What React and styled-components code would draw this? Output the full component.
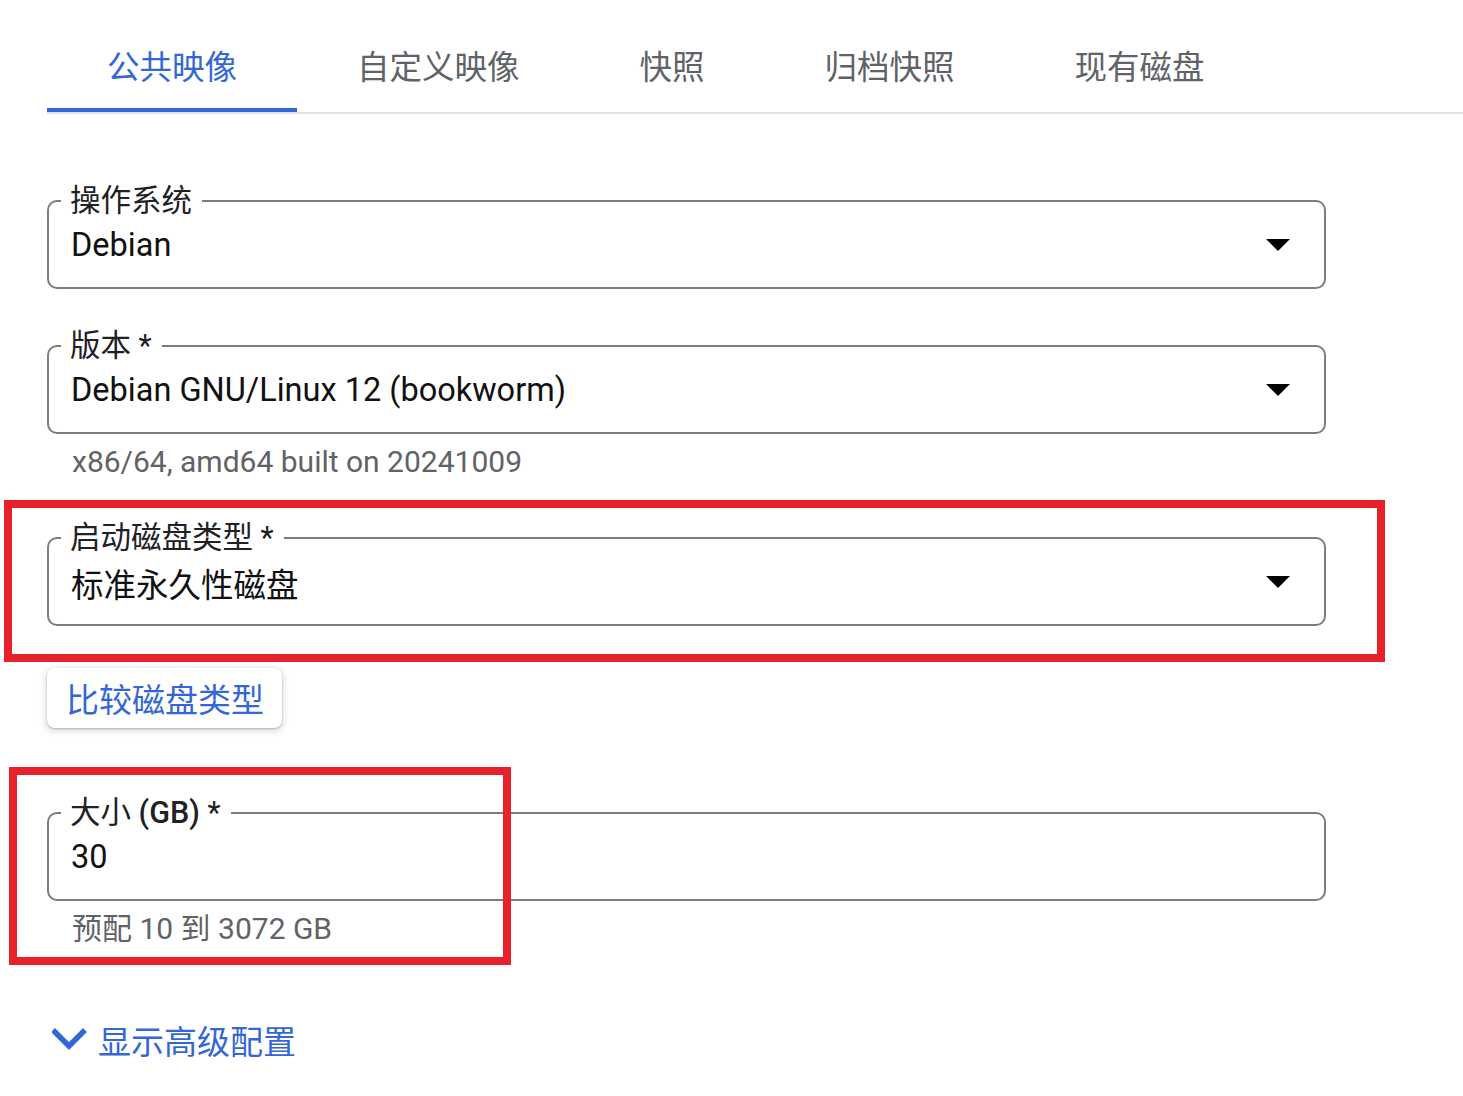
import React from "react";
import styled, { createGlobalStyle } from "styled-components";

const Global = createGlobalStyle`
  html, body { margin: 0; padding: 0; background: #ffffff; }
  body {
    font-family: Roboto, "Noto Sans CJK SC", "Noto Sans", sans-serif;
    color: #202124;
  }
  * { box-sizing: border-box; }
`;

const Page = styled.div`
  position: relative;
  width: 1463px;
  min-height: 1096px;
  padding-left: 47px;
  overflow: hidden;
`;

const TabBar = styled.div`
  display: flex;
  border-bottom: 2px solid #e1e1e1;
`;

const Tab = styled.div`
  padding: 48px 60px 20px;
  font-size: 32.5px;
  line-height: 40px;
  white-space: nowrap;
  color: ${(p) => (p.$active ? "#3367d6" : "#5f6368")};
  border-bottom: 4px solid ${(p) => (p.$active ? "#3367d6" : "transparent")};
`;

const Form = styled.div`
  display: flex;
  flex-direction: column;
  align-items: flex-start;
  padding-top: 71px;
`;

const Field = styled.fieldset`
  margin: ${(p) => p.$top || 0}px 0 0;
  width: 1279px;
  border: 2px solid #7d7d7d;
  border-radius: 10px;
  padding: 0 34px 14px 12px;
  min-inline-size: 0;
`;

const Legend = styled.legend`
  padding: 0 10px 0 9px;
  font-size: 30.5px;
  line-height: 32px;
  color: #202124;
  white-space: nowrap;
`;

const Strong = styled.span`
  font-weight: 500;
`;

const ValueRow = styled.div`
  display: flex;
  align-items: center;
  justify-content: space-between;
  height: 56px;
  padding-left: 10px;
  font-size: 32.5px;
  color: #111111;
`;

const Caret = styled.span`
  width: 0;
  height: 0;
  border-left: 12px solid transparent;
  border-right: 12px solid transparent;
  border-top: 12px solid #000000;
`;

const Hint = styled.div`
  margin-top: 10px;
  padding-left: 25px;
  font-size: 30px;
  line-height: 36px;
  color: #5f6368;
`;

const Button = styled.button`
  margin-top: 42px;
  height: 60px;
  width: 235px;
  padding: 0 0 0 19px;
  text-align: left;
  border: none;
  border-radius: 8px;
  background: #ffffff;
  font-family: inherit;
  font-size: 33px;
  color: #3367d6;
  box-shadow: 0 1px 2px rgba(60, 64, 67, 0.3), 0 2px 6px 2px rgba(60, 64, 67, 0.15);
`;

const Advanced = styled.div`
  margin-top: 69px;
  height: 48px;
  display: flex;
  align-items: center;
  gap: 10px;
  padding-left: 5px;
  font-size: 33px;
  color: #3367d6;
`;

const Highlight = styled.div`
  position: absolute;
  border: 8px solid #e8202a;
  pointer-events: none;
`;

const Chevron = () => (
  <svg width="36" height="24" viewBox="0 0 36 24">
    <path d="M3 4 L17 18 L31 4" fill="none" stroke="#3367d6" strokeWidth="5.5" strokeLinecap="square" />
  </svg>
);

const tabs = ["公共映像", "自定义映像", "快照", "归档快照", "现有磁盘"];

export default function App() {
  return (
    <>
      <Global />
      <Page>
        <TabBar>
          {tabs.map((t, i) => (
            <Tab key={t} $active={i === 0}>{t}</Tab>
          ))}
        </TabBar>
        <Form>
          <Field>
            <Legend>操作系统</Legend>
            <ValueRow>
              <span>Debian</span>
              <Caret />
            </ValueRow>
          </Field>
          <Field $top={41}>
            <Legend>版本 *</Legend>
            <ValueRow>
              <span>Debian GNU/Linux 12 (bookworm)</span>
              <Caret />
            </ValueRow>
          </Field>
          <Hint>x86/64, amd64 built on 20241009</Hint>
          <Field $top={42}>
            <Legend>启动磁盘类型 *</Legend>
            <ValueRow>
              <span>标准永久性磁盘</span>
              <Caret />
            </ValueRow>
          </Field>
          <Button>比较磁盘类型</Button>
          <Field $top={69}>
            <Legend>大小 <Strong>(GB)</Strong> *</Legend>
            <ValueRow>
              <span>30</span>
            </ValueRow>
          </Field>
          <Hint>预配 10 到 3072 GB</Hint>
          <Advanced>
            <Chevron />
            <span>显示高级配置</span>
          </Advanced>
        </Form>
        <Highlight style={{ left: 4, top: 500, width: 1381, height: 162 }} />
        <Highlight style={{ left: 9, top: 767, width: 502, height: 198 }} />
      </Page>
    </>
  );
}
